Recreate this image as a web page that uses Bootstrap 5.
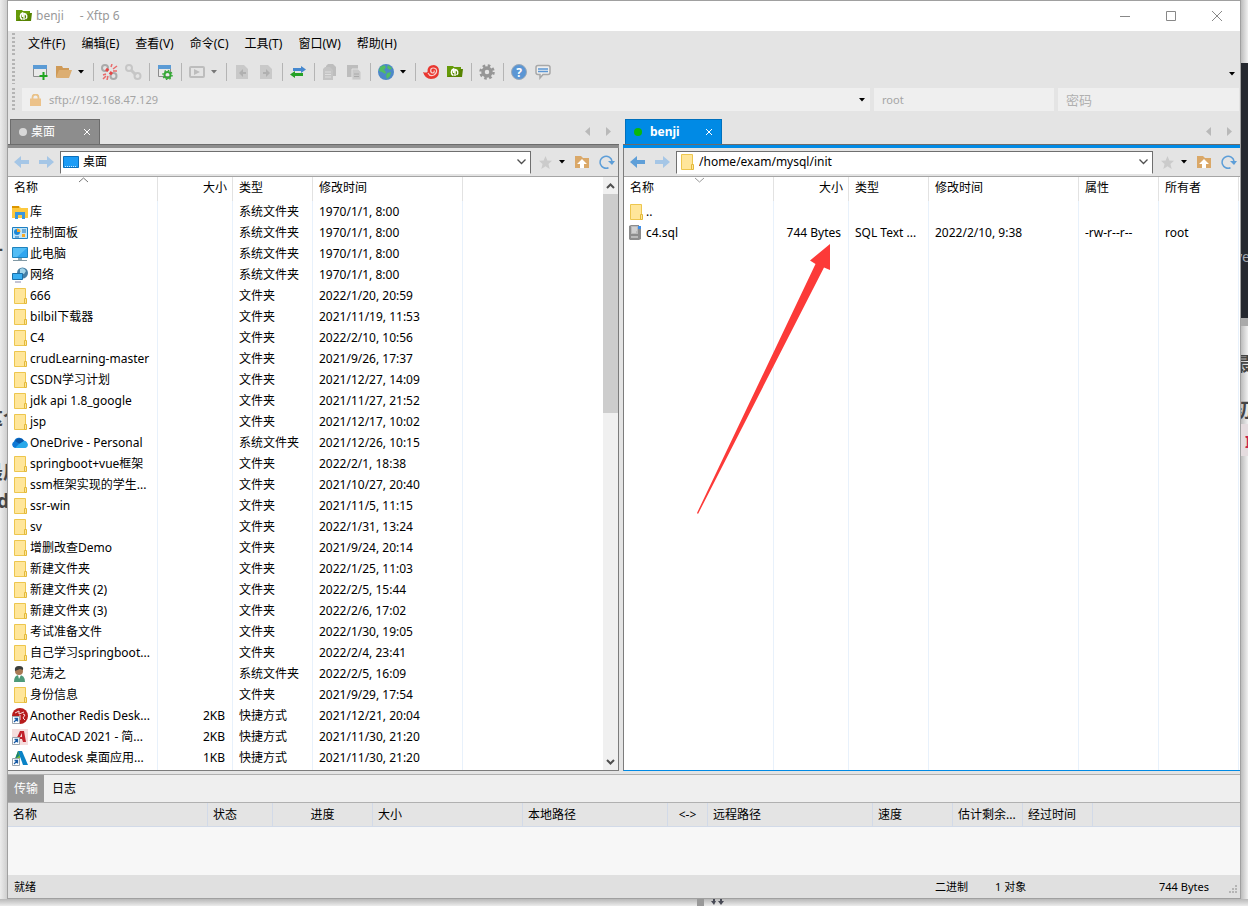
<!DOCTYPE html>
<html lang="zh-CN">
<head>
<meta charset="utf-8">
<meta name="viewport" content="width=device-width, initial-scale=1">
<title>benji - Xftp 6</title>
<link href="https://cdn.jsdelivr.net/npm/bootstrap@5.3.0/dist/css/bootstrap.min.css" rel="stylesheet">
<style>
body{font:12px/16px "Noto Sans","Noto Sans CJK SC",sans-serif;color:#000;background:#ececec}
button{font:inherit;color:inherit;background:none;border:0;padding:0}
svg{display:block;flex:none}
.desktop{display:grid;grid-template-columns:7px minmax(0,1fr) 7px;grid-template-rows:1fr 7px}
.behind{position:relative;overflow:hidden;background:linear-gradient(90deg,#ececec,#cfcfcf)}
.behind-right{background:linear-gradient(90deg,#bdbdbd,#f0f0f0)}
.behind-bottom{grid-column:1/4;background:linear-gradient(#b8b8b8,#ececec)}
.scrap{position:absolute;white-space:nowrap;font-weight:700;font-size:19px;line-height:24px;color:#454545}
.win{border:1px solid #a0a0a0;background:#e4e4e4}
.titlebar{height:30px;background:#fff;color:#999}
.caption-btn{width:46px;height:30px;display:grid;place-items:center}
.grip{width:3px;flex:none;margin:2px 0 2px 4px;background:repeating-linear-gradient(#b4b4b4 0 2px,transparent 2px 4px)}
.menu-row{height:26px}
.menu-row button{padding:0 8px;line-height:26px}
.menu-row button:first-child{padding-left:0}
.tool-row{height:29px}
.tool{width:24px;height:24px;display:grid;place-items:center}
.drop{width:13px;height:24px;display:flex;align-items:center;padding-left:2px}
.tool-sep{width:8px;height:18px;background:linear-gradient(#b4b4b4,#b4b4b4) center/1px 100% no-repeat}
.addr-row{height:28px;margin-bottom:2px}
.addr-field{background:#efefef;height:23px;font-size:11px}
.addr-field input{background:none;border:0;color:#a5a5a5;padding:0;min-width:0;outline:0}
.addr-field input::placeholder{color:#b0b0b0;opacity:1}
.f-user{flex:0 0 180px}.f-pass{flex:0 0 181px}
.f-pass input{font-size:13px}
.panes{display:grid;grid-template-columns:minmax(0,611fr) minmax(0,617fr);column-gap:4px}
.tabstrip{height:28px}
.pane-tab{height:25px;width:90px;background:#8d8d8d;border:1px solid #6c6c6c;border-bottom:0;color:#fff;padding:0 9px 0 8px;margin-left:2px}
.pane-tab .dot{width:8px;height:8px;border-radius:50%;background:#d8d8d8}
.pane-right .pane-tab{width:97px;margin-left:2px;background:#008ae5;border-color:#0070bd;font-weight:700}
.pane-right .dot{background:#0ab80a}
.tabbar-line{height:4px;background:#8d8d8d;border-top:1px solid #6c6c6c}
.pane-right .tabbar-line{background:#008ae5}
.pane-box{border-right:1px solid #7c7c7c;border-bottom:1px solid #7c7c7c}
.pane-right .pane-box{border-right:0;border-left:1px solid #7c7c7c;border-bottom-color:#008ae5}
.nav-row{height:29px;padding-left:6px;border-bottom:1px solid #a5a5a5}
.nav-row .arrow{width:16px}
.pale{color:#a5c6e6}
.strong{color:#5f9fd8}
.combo{height:23px;background:#fff;border:1px solid #6f6f6f;border-bottom-color:#fff;margin-left:2px;padding-left:2px}
.combo input{border:0;padding:0;outline:0;min-width:0}
.star-drop{padding-left:7px}
.up-btn{margin-left:10px}
.reload-btn{margin:0 3px 0 9px}
.listing{background:#fff;position:relative}
.files{table-layout:fixed;border-collapse:separate;border-spacing:0;width:100%}
.files th,.files td{border-right:1px solid #e8f1fb;padding:0 6px;white-space:nowrap;overflow:hidden;line-height:21px;height:21px}
.files th{height:24px;line-height:22px;font-weight:400;border-color:#e2e2e2;position:relative;vertical-align:top}
.files th:last-child,.files td:last-child{border-right:0}
.files td:first-child{padding:0 0 0 4px}
.files .num{text-align:right;padding-right:5px}
.files td.num{padding-right:7px}
.files .filler td{height:auto;padding:0}
.files .name{display:flex;gap:2px;align-items:center;height:21px}
.sort{position:absolute;left:70px;top:0}
.scroll{flex:0 0 15px;background:#f0f0f0}
.scroll button{height:17px;display:grid;place-items:center}
.scroll .thumb{background:#cdcdcd}
.pointer{position:absolute;left:73px;top:67px;pointer-events:none}
.dock{margin-top:3px;border-top:1px solid #b0b0b0}
.dock-tabs{height:28px;background:#efefef;border-bottom:1px solid #b0b0b0}
.dock-tabs button{padding:0 6px}
.dock-tabs .on{background:#999;color:#fff}
.queue{table-layout:fixed;width:100%;border-collapse:separate;border-spacing:0}
.queue th{font-weight:400;height:24px;padding:0 5px;border-right:1px solid #d2dae8;border-bottom:1px solid #d2dae8;white-space:nowrap}
.queue th:last-child{border-right:0}
.queue td{height:48px;background:#f7f7f7}
.status{height:23px;background:#e0e0e0;padding:0 2px 0 6px;font-size:11px}
.st-mode{width:60px}.st-count{width:164px}.st-size{width:70px}
</style>
</head>
<body>
<svg width="0" height="0" class="position-absolute" aria-hidden="true">
<symbol id="folder" viewBox="0 0 16 18"><path d="M2.500 1.500h11v15h-11z" fill="#ffe69a" stroke="#edc64e"/><path d="M12.500 11.500h2v5h-2z" fill="#ffe69a" stroke="#e3b93a"/></symbol>
<symbol id="lib" viewBox="0 0 16 16"><path d="M0 2h7l2 2h7v10H0z" fill="#fdc93f"/><path d="M0 2h7v2H0z" fill="#dc9600"/><path d="M3 15V8h10v7h-3v-4H6v4z" fill="#3a96dd"/></symbol>
<symbol id="panel" viewBox="0 0 16 16"><path d="M.5 2.500h15v11H.5z" fill="#bfe6fb" stroke="#1e7fc2"/><circle cx="5" cy="7" r="3" fill="#1c87d6"/><path d="M5 7V3.500A3.500 3.500 0 0 1 8.500 7z" fill="#f9a825"/><path d="M10 5h4M10 7h4M3 12h4" stroke="#1c6fb3"/><path d="M10 9h3v3h-3z" fill="#f9a825"/></symbol>
<symbol id="pc" viewBox="0 0 16 16"><path d="M.5 1.500h15v10H.5z" fill="#53bdf5" stroke="#1f83bd"/><path d="M15 2v9H5z" fill="#2fa5ef"/><path d="M6 12h4v2H6z" fill="#91a9b5"/><path d="M1 14.500h14" stroke="#8199a5"/></symbol>
<symbol id="net" viewBox="0 0 16 16"><circle cx="10.500" cy="6" r="5.500" fill="#477fa5"/><path d="M8 2q4-2 6 2l-2 3-4-1z" fill="#a5d5e9"/><path d="M.5 6.500h10v6H.5z" fill="#39aff2" stroke="#1b70a8"/><path d="M3 15h6" stroke="#8888aa"/></symbol>
<symbol id="cloud" viewBox="0 0 16 16"><path d="M3 13a3.500 3.500 0 0 1-1-6.500 5.500 5.500 0 0 1 10-1A4 4 0 0 1 13 13z" fill="#0f78d4"/><path d="M3 6a5 5 0 0 1 9 0L8 9z" fill="#0a57a8"/><path d="M7 9l5-3a3.800 3.800 0 0 1 3 6.200l-2 .8H3z" fill="#28a8ea"/></symbol>
<symbol id="user" viewBox="0 0 16 16"><path d="M2 16q0-7 5-7 6 0 6 7z" fill="#4d9a7a"/><circle cx="7" cy="5" r="4" fill="#a87955"/><path d="M3 5q-1-5 4-5 5 0 4 4L8 3z" fill="#3a3d3b"/><path d="M6 9l1 4 2-4z" fill="#fff"/></symbol>
<symbol id="link" viewBox="0 0 8 8"><path d="M.5.5h7v7h-7z" fill="#fff" stroke="#9aa4ad"/><path d="M2 6l3-3M2.500 2.500H5.500v3" fill="none" stroke="#195ca5" stroke-width="1.300"/></symbol>
<symbol id="redis" viewBox="0 0 16 16"><circle cx="8" cy="8" r="8" fill="#b71c1c"/><path d="M3 5l4-2v3l5-2M8 7v5M11 6l2 1-2 3 2 2" fill="none" stroke="#f6dede"/><use href="#link" x="0" y="8" width="8" height="8"/></symbol>
<symbol id="cad" viewBox="0 0 16 16"><path d="M0 0h16v16H0z" fill="#f5dddd"/><path d="M3 13L8 2h4l2 11h-3l-1-3H7l-2 3z" fill="#c1212b"/><path d="M8 8l2-4v4z" fill="#f5dddd"/><use href="#link" x="0" y="8" width="8" height="8"/></symbol>
<symbol id="adsk" viewBox="0 0 16 16"><path d="M1 14L6 1h4l-4 13z" fill="#79b932"/><path d="M6 1h4l6 14h-5z" fill="#0a83c6"/><path d="M6 1L3 9l4-3z" fill="#147f7d"/><use href="#link" x="0" y="8" width="8" height="8"/></symbol>
<symbol id="sql" viewBox="0 0 16 16"><path d="M1 1l2-1h8v3h2v11l-2 1H2l-1-1z" fill="#8d8d8d"/><path d="M3 1h7v8H3z" fill="#bababa"/><path d="M4 3h5M4 5h5M4 7h4M3 12h7" stroke="#e6e6e6"/><path d="M10 1h3v3h-3z" fill="#3c8eea"/></symbol>
<symbol id="tri" viewBox="0 0 7 4"><path d="M0 0h6L3 3.500z"/></symbol>
<symbol id="xftp" viewBox="0 0 16 14"><path d="M0 1h6l1 1h7v10H0z" fill="#659a09"/><path d="M14 4h2l-1 8H0z" fill="#568300"/><path d="M6.500 10.500A3.500 3.500 0 0 1 6.500 4V8M8 11V4.500a3 3 0 0 1 1.500 5.500" fill="none" stroke="#fff" stroke-width="1.400"/></symbol>
<symbol id="back" viewBox="0 0 16 14"><path d="M0 7l7-6v4h8v4H7v4z" fill="currentColor"/></symbol>
<symbol id="fwd" viewBox="0 0 16 14"><path d="M16 7L9 1v4H1v4h8v4z" fill="currentColor"/></symbol>
<symbol id="star" viewBox="0 0 14 14"><path d="M7 0l2 4.800 5 .4-3.800 3.300L11.500 14 7 11l-4.500 3 1.300-5.500L0 5.200l5-.4z" fill="#cbcbcb"/></symbol>
<symbol id="up" viewBox="0 0 15 14"><path d="M0 1h6l2 2h6v10H0z" fill="#daa868"/><path d="M7 4l5 5H9v4H5V9H2z" fill="#fff"/></symbol>
<symbol id="reload" viewBox="0 0 16 14"><path d="M9.500 12.700A6 6 0 1 1 13 6" fill="none" stroke="#5d9ed8" stroke-width="1.500"/><path d="M9 6h7l-3 4z" fill="#5d9ed8"/></symbol>
<symbol id="chev" viewBox="0 0 9 6"><path d="M.5.5l4 4 4-4" fill="none" stroke="#505050" stroke-width="1.300"/></symbol>
</svg>

<div class="desktop min-vh-100">
  <div class="behind" aria-hidden="true">
    <span class="scrap" style="right:4px;top:236px">—</span>
    <span class="scrap" style="right:-15px;top:406px">这个</span>
    <span class="scrap" style="right:-15px;top:460px">最后</span>
    <span class="scrap" style="right:-2px;top:489px">d</span>
  </div>
  <main class="win d-flex flex-column">
    <header class="titlebar d-flex align-items-center ps-2">
      <svg width="16" height="14"><use href="#xftp"/></svg>
      <span class="ms-1">benji</span><span class="ms-3">- Xftp 6</span>
      <button class="caption-btn ms-auto" aria-label="最小化"><svg width="10" height="10"><path d="M0 5.500h10" stroke="#888"/></svg></button>
      <button class="caption-btn" aria-label="最大化"><svg width="10" height="10"><path d="M.5.5h9v9h-9z" fill="none" stroke="#888"/></svg></button>
      <button class="caption-btn" aria-label="关闭"><svg width="10" height="10"><path d="M0 0l10 10M10 0L0 10" stroke="#888"/></svg></button>
    </header>

    <div class="d-flex menu-row"><span class="grip"></span>
      <nav class="d-flex" style="padding-left:13px">
        <button>文件(F)</button><button>编辑(E)</button><button>查看(V)</button><button>命令(C)</button><button>工具(T)</button><button>窗口(W)</button><button>帮助(H)</button>
      </nav>
    </div>
    <div class="d-flex tool-row"><span class="grip"></span>
      <div class="d-flex align-items-center flex-grow-1" style="padding-left:13px" role="toolbar">
        <button class="tool" aria-label="新建"><svg width="16" height="16"><path d="M1.500 1.500h13v11h-13z" fill="#e9e9e9" stroke="#8b8b8b"/><path d="M1 1h14v4H1z" fill="#5b9bd5"/><path d="M11.500 8v8M7.500 12h8" stroke="#1fa51f" stroke-width="2"/></svg></button>
        <button class="tool" aria-label="打开"><svg width="16" height="14"><path d="M0 1h6l1 2h6v9H0z" fill="#cf9a57"/><path d="M3 5h13l-3 8H0z" fill="#dcae72"/></svg></button>
        <button class="drop" aria-label="打开列表"><svg width="7" height="4"><use href="#tri"/></svg></button>
        <span class="tool-sep"></span>
        <button class="tool" aria-label="断开"><svg width="17" height="16"><g fill="none" stroke="#aaa" stroke-width="2"><circle cx="4" cy="4" r="3"/><circle cx="12.500" cy="12" r="3"/></g><path d="M5 5l7 6" stroke="#e84545" stroke-width="3" stroke-dasharray="3 2"/><path d="M10 3l1-3M12 5l4-3M12 7h4M2 11l3-1M2 15l3-3M6 16l1-4" stroke="#e96b6b" stroke-width="1.500"/></svg></button>
        <button class="tool" aria-label="重新连接"><svg width="17" height="16"><g fill="none" stroke="#c6c6c6" stroke-width="2"><circle cx="4" cy="4" r="3"/><circle cx="12.500" cy="12" r="3"/><path d="M6 6l5 5" stroke-width="3"/></g></svg></button>
        <span class="tool-sep"></span>
        <button class="tool" aria-label="属性"><svg width="16" height="16"><path d="M1.500 1.500h12v11h-12z" fill="#e9e9e9" stroke="#8b8b8b"/><path d="M1 1h13v4H1z" fill="#5b9bd5"/><circle cx="10.500" cy="11" r="3" fill="none" stroke="#35a835" stroke-width="2"/><circle cx="10.500" cy="11" r="4.500" fill="none" stroke="#35a835" stroke-width="1.500" stroke-dasharray="1.500 2"/></svg></button>
        <span class="tool-sep"></span>
        <button class="tool" aria-label="运行"><svg width="16" height="12"><rect x="1" y="1" width="14" height="10" rx="1" fill="none" stroke="#bdbdbd" stroke-width="2"/><path d="M5 3l6 3-6 3z" fill="#bdbdbd"/></svg></button>
        <button class="drop" aria-label="运行列表"><svg width="7" height="4" fill="#777"><use href="#tri"/></svg></button>
        <span class="tool-sep"></span>
        <button class="tool" aria-label="向左传输"><svg width="12" height="14"><path d="M0 0h8l4 4v10H0z" fill="#c9c9c9"/><path d="M3 8l4-4v3h3v2H7v3z" fill="#b0b0b0"/></svg></button>
        <button class="tool" aria-label="向右传输"><svg width="12" height="14"><path d="M0 0h8l4 4v10H0z" fill="#c9c9c9"/><path d="M10 8L6 4v3H3v2h3v3z" fill="#b0b0b0"/></svg></button>
        <span class="tool-sep"></span>
        <button class="tool" aria-label="同步"><svg width="16" height="12"><path d="M3 2h8V0l5 3.500L11 7V5H3z" fill="#4588cf"/><path d="M13 7H5V5L0 8.500 5 12v-2h8z" fill="#26a126"/></svg></button>
        <span class="tool-sep"></span>
        <button class="tool" aria-label="复制"><svg width="14" height="16"><path d="M5 0h5l3 3v9H3V2z" fill="#bdbdbd"/><path d="M0 5l2-2h5l3 3v10H0z" fill="#c4c4c4"/><path d="M2 8h6M2 10.500h6M2 13h6" stroke="#dedede"/></svg></button>
        <button class="tool" aria-label="粘贴"><svg width="14" height="16"><path d="M0 1h11v12H0z" fill="#bdbdbd"/><path d="M5 5h6l3 3v8H5z" fill="#c9c9c9" stroke="#e0e0e0"/><path d="M7 10h5M7 12.500h5" stroke="#aaa"/></svg></button>
        <span class="tool-sep"></span>
        <button class="tool" aria-label="浏览器"><svg width="16" height="16"><circle cx="8" cy="8" r="8" fill="#4c88c8"/><path d="M2 3l4-2 2 2-2 3 2 2-1 2-3-2-3-1zM9 9l4-1-1 4-3 3-1-3zM10 1l4 3-2 2-3-2z" fill="#51bd63"/></svg></button>
        <button class="drop" aria-label="浏览器列表"><svg width="7" height="4"><use href="#tri"/></svg></button>
        <span class="tool-sep"></span>
        <button class="tool" aria-label="Xshell"><svg width="16" height="15"><path d="M0 8q3 1 4.500 0Q4 1 11 1q5 1 5 6 0 8-8 8-6 0-8-7z" fill="#e93730"/><path d="M5 9q2 4 6 2 4-3 2-6-3-2-5 0-1 3 1 4 3 0 2-2.500" fill="none" stroke="#f7d2cf" stroke-width="1.200"/></svg></button>
        <button class="tool" aria-label="Xftp"><svg width="16" height="14"><use href="#xftp"/></svg></button>
        <span class="tool-sep"></span>
        <button class="tool" aria-label="选项"><svg width="16" height="16"><circle cx="8" cy="8" r="4" fill="none" stroke="#969696" stroke-width="3.500"/><circle cx="8" cy="8" r="6.500" fill="none" stroke="#969696" stroke-width="2.500" stroke-dasharray="2.600 2.500"/></svg></button>
        <span class="tool-sep"></span>
        <button class="tool" aria-label="帮助"><svg width="16" height="16"><circle cx="8" cy="8" r="7.500" fill="#5b96d4" stroke="#9aa9b9"/><text x="8" y="12.500" text-anchor="middle" font-size="12" font-weight="700" fill="#fff">?</text></svg></button>
        <button class="tool" aria-label="反馈"><svg width="16" height="16"><path d="M3 1.500h10q2 0 2 2v5q0 2-2 2H8L5 14v-3.500H3q-2 0-2-2v-5q0-2 2-2z" fill="#eee" stroke="#a8a8a8" stroke-width="1.500"/><path d="M3 5h10M3 7.500h10" stroke="#5b96d4" stroke-width="1.500"/></svg></button>
        <button class="drop ms-auto align-self-end" aria-label="更多"><svg width="7" height="4"><use href="#tri"/></svg></button>
      </div>
    </div>
    <form class="d-flex addr-row"><span class="grip"></span>
      <div class="d-flex flex-grow-1 gap-1" style="padding:2px 1px 0 7px">
        <div class="addr-field d-flex align-items-center flex-grow-1 ps-2">
          <svg width="11" height="12"><path d="M2.500 5V3.500a3 3 0 0 1 6 0V5" fill="none" stroke="#e9c288" stroke-width="1.800"/><path d="M0 4.500h11V12H0z" fill="#ecc28a"/></svg>
          <input class="flex-grow-1 ms-2" aria-label="地址" value="sftp://192.168.47.129">
          <button type="button" class="drop" aria-label="历史"><svg width="7" height="4"><use href="#tri"/></svg></button>
        </div>
        <div class="addr-field f-user ps-2 d-flex"><input class="w-100" aria-label="用户名" value="root"></div>
        <div class="addr-field f-pass ps-2 d-flex"><input class="w-100" type="password" aria-label="密码" placeholder="密码"></div>
      </div>
    </form>

    <div class="panes flex-grow-1">
      <section class="pane-left d-flex flex-column">
        <div class="tabstrip d-flex align-items-end">
          <button class="pane-tab d-flex align-items-center gap-1"><span class="dot"></span><span>桌面</span><svg class="ms-auto" width="6" height="6"><path d="M0 0l6 6M6 0L0 6" stroke="#fff"/></svg></button>
          <div class="ms-auto d-flex gap-3 mb-2 pe-2"><svg width="5" height="9"><path d="M5 0v9L0 4.500z" fill="#b9b9b9"/></svg><svg width="5" height="9"><path d="M0 0v9l5-4.500z" fill="#b9b9b9"/></svg></div>
        </div>
        <div class="tabbar-line"></div>
        <div class="pane-box d-flex flex-column flex-grow-1">
          <div class="nav-row d-flex align-items-center">
            <button class="arrow pale" aria-label="后退"><svg width="16" height="14"><use href="#back"/></svg></button>
            <button class="arrow pale ms-2 me-1" aria-label="前进"><svg width="16" height="14"><use href="#fwd"/></svg></button>
            <div class="combo d-flex align-items-center flex-grow-1">
              <svg width="16" height="12" class="me-1"><path d="M.5.500h15v11H.5z" fill="#1c9cf6" stroke="#0b6fbb"/><path d="M2 10.500h12" stroke="#c8e8ff" stroke-dasharray="1 1"/></svg>
              <input class="flex-grow-1" aria-label="本地路径" value="桌面">
              <button class="px-1" aria-label="展开"><svg width="9" height="6"><use href="#chev"/></svg></button>
            </div>
            <button class="ms-2" aria-label="书签"><svg width="13" height="13"><use href="#star"/></svg></button>
            <button class="drop star-drop" aria-label="书签列表"><svg width="7" height="4"><use href="#tri"/></svg></button>
            <button class="up-btn" aria-label="上级"><svg width="15" height="14"><use href="#up"/></svg></button>
            <button class="reload-btn" aria-label="刷新"><svg width="16" height="14"><use href="#reload"/></svg></button>
          </div>
          <div class="listing d-flex flex-grow-1">
            <div class="flex-grow-1 d-grid">
            <table class="files">
              <colgroup><col style="width:150px"><col style="width:75px"><col style="width:80px"><col style="width:150px"><col></colgroup>
              <thead><tr><th>名称<svg class="sort" width="11" height="6"><path d="M1 5l4.500-4L10 5" fill="none" stroke="#777"/></svg></th><th class="num">大小</th><th>类型</th><th>修改时间</th><th></th></tr></thead>
              <tbody id="local"></tbody>
            </table>
            </div>
            <div class="scroll d-flex flex-column">
              <button aria-label="向上滚动"><svg width="9" height="6"><path d="M1 5l3.500-3.500L8 5" fill="none" stroke="#505050" stroke-width="2"/></svg></button>
              <div class="thumb" style="flex:0 0 37%"></div>
              <button class="mt-auto" aria-label="向下滚动"><svg width="9" height="6"><path d="M1 1l3.500 3.500L8 1" fill="none" stroke="#505050" stroke-width="2"/></svg></button>
            </div>
          </div>
        </div>
      </section>

      <section class="pane-right d-flex flex-column">
        <div class="tabstrip d-flex align-items-end">
          <button class="pane-tab d-flex align-items-center gap-1"><span class="dot me-1"></span><span>benji</span><svg class="ms-auto" width="6" height="6"><path d="M0 0l6 6M6 0L0 6" stroke="#fff"/></svg></button>
          <div class="ms-auto d-flex gap-3 mb-2 pe-2"><svg width="5" height="9"><path d="M5 0v9L0 4.500z" fill="#b9b9b9"/></svg><svg width="5" height="9"><path d="M0 0v9l5-4.500z" fill="#b9b9b9"/></svg></div>
        </div>
        <div class="tabbar-line"></div>
        <div class="pane-box d-flex flex-column flex-grow-1">
          <div class="nav-row d-flex align-items-center">
            <button class="arrow strong" aria-label="后退"><svg width="16" height="14"><use href="#back"/></svg></button>
            <button class="arrow pale ms-2 me-1" aria-label="前进"><svg width="16" height="14"><use href="#fwd"/></svg></button>
            <div class="combo d-flex align-items-center flex-grow-1">
              <svg width="16" height="18" class="me-1"><use href="#folder"/></svg>
              <input class="flex-grow-1" aria-label="远程路径" value="/home/exam/mysql/init">
              <button class="px-1" aria-label="展开"><svg width="9" height="6"><use href="#chev"/></svg></button>
            </div>
            <button class="ms-2" aria-label="书签"><svg width="13" height="13"><use href="#star"/></svg></button>
            <button class="drop star-drop" aria-label="书签列表"><svg width="7" height="4"><use href="#tri"/></svg></button>
            <button class="up-btn" aria-label="上级"><svg width="15" height="14"><use href="#up"/></svg></button>
            <button class="reload-btn" aria-label="刷新"><svg width="16" height="14"><use href="#reload"/></svg></button>
          </div>
          <div class="listing d-grid flex-grow-1">
            <table class="files">
              <colgroup><col style="width:150px"><col style="width:75px"><col style="width:80px"><col style="width:150px"><col style="width:80px"><col style="width:80px"><col></colgroup>
              <thead><tr><th>名称<svg class="sort" width="11" height="6"><path d="M1 1l4.500 4L10 1" fill="none" stroke="#999"/></svg></th><th class="num">大小</th><th>类型</th><th>修改时间</th><th>属性</th><th>所有者</th><th class="p-0"></th></tr></thead>
              <tbody id="remote"></tbody>
            </table>
            <svg class="pointer" width="134" height="271" aria-hidden="true"><path d="M0 269L118.500 20l-5.500-3.500L133 0v26l-6-2.500L1 270z" fill="#fc3a38"/></svg>
          </div>
        </div>
      </section>
    </div>

    <section class="dock">
      <div class="dock-tabs d-flex"><button class="on">传输</button><button class="ms-1 px-1">日志</button></div>
      <table class="queue">
        <colgroup><col style="width:200px"><col style="width:65px"><col style="width:100px"><col style="width:150px"><col style="width:145px"><col style="width:40px"><col style="width:165px"><col style="width:80px"><col style="width:70px"><col style="width:70px"><col></colgroup>
        <thead><tr><th>名称</th><th>状态</th><th class="text-center">进度</th><th>大小</th><th>本地路径</th><th class="text-center">&lt;-&gt;</th><th>远程路径</th><th>速度</th><th>估计剩余...</th><th>经过时间</th><th></th></tr></thead>
        <tbody><tr><td colspan="11"></td></tr></tbody>
      </table>
    </section>
    <footer class="status d-flex align-items-center"><span>就绪</span><span class="st-mode ms-auto">二进制</span><span class="st-count">1 对象</span><span class="st-size">744 Bytes</span>
      <svg class="align-self-end mb-1" width="9" height="9" fill="#b5b5b5"><path d="M6 0h2v2H6zM3 3h2v2H3zM6 3h2v2H6zM0 6h2v2H0zM3 6h2v2H3zM6 6h2v2H6z"/></svg>
    </footer>
  </main>
  <div class="behind behind-right" aria-hidden="true">
    <div class="position-absolute w-100" style="top:63px;height:255px;background:#25282f"></div>
    <div class="position-absolute w-100" style="top:318px;height:8px;background:#aaa"></div>
    <div class="position-absolute w-100" style="top:424px;height:32px;background:#e5dcdf"></div>
    <span class="scrap fw-normal" style="left:-6px;top:245px;font-size:14px;color:#a4a8ae">ve</span>
    <span class="scrap" style="left:-8px;top:352px">最</span>
    <span class="scrap" style="left:-8px;top:398px">初</span>
    <span class="scrap" style="left:4px;top:430px;font-size:16px;color:#c7254e">I</span>
  </div>
  <div class="behind behind-bottom" aria-hidden="true">
    <div class="position-absolute h-100" style="left:697px;width:7px;background:#999"></div>
    <svg class="position-absolute" style="left:711px;top:0" width="14" height="7"><path d="M2 0h2v2h1L3 6 0 2h2zM9 0h2v2h2l-3 4-3-4h2z" fill="#484a55"/></svg>
  </div>
</div>

<script>
const D = '文件夹', S = '系统文件夹', L = '快捷方式';
const local = [
  ['lib','库','',S,'1970/1/1, 8:00'],['panel','控制面板','',S,'1970/1/1, 8:00'],['pc','此电脑','',S,'1970/1/1, 8:00'],['net','网络','',S,'1970/1/1, 8:00'],
  ['folder','666','',D,'2022/1/20, 20:59'],['folder','bilbil下载器','',D,'2021/11/19, 11:53'],['folder','C4','',D,'2022/2/10, 10:56'],
  ['folder','crudLearning-master','',D,'2021/9/26, 17:37'],['folder','CSDN学习计划','',D,'2021/12/27, 14:09'],['folder','jdk api 1.8_google','',D,'2021/11/27, 21:52'],
  ['folder','jsp','',D,'2021/12/17, 10:02'],['cloud','OneDrive - Personal','',S,'2021/12/26, 10:15'],['folder','springboot+vue框架','',D,'2022/2/1, 18:38'],
  ['folder','ssm框架实现的学生...','',D,'2021/10/27, 20:40'],['folder','ssr-win','',D,'2021/11/5, 11:15'],['folder','sv','',D,'2022/1/31, 13:24'],
  ['folder','增删改查Demo','',D,'2021/9/24, 20:14'],['folder','新建文件夹','',D,'2022/1/25, 11:03'],['folder','新建文件夹 (2)','',D,'2022/2/5, 15:44'],
  ['folder','新建文件夹 (3)','',D,'2022/2/6, 17:02'],['folder','考试准备文件','',D,'2022/1/30, 19:05'],['folder','自己学习springboot...','',D,'2022/2/4, 23:41'],
  ['user','范涛之','',S,'2022/2/5, 16:09'],['folder','身份信息','',D,'2021/9/29, 17:54'],['redis','Another Redis Desk...','2KB',L,'2021/12/21, 20:04'],
  ['cad','AutoCAD 2021 - 简...','2KB',L,'2021/11/30, 21:20'],['adsk','Autodesk 桌面应用...','1KB',L,'2021/11/30, 21:20']
];
const remote = [
  ['folder','..','','','','',''],
  ['sql','c4.sql','744 Bytes','SQL Text ...','2022/2/10, 9:38','-rw-r--r--','root']
];
const row = ([icon, name, size, ...rest]) =>
  `<tr><td><div class="name"><svg width="16" height="${icon === 'folder' ? 18 : 16}"><use href="#${icon}"/></svg><span>${name}</span></div></td><td class="num">${size}</td>` +
  rest.map(c => `<td>${c}</td>`).join('') + '<td></td></tr>';
const filler = n => '<tr class="filler">' + '<td></td>'.repeat(n) + '</tr>';
document.getElementById('local').innerHTML = local.map(row).join('') + filler(5);
document.getElementById('remote').innerHTML = remote.map(row).join('') + filler(7);
</script>
<script src="https://cdn.jsdelivr.net/npm/bootstrap@5.3.0/dist/js/bootstrap.bundle.min.js"></script>
</body>
</html>
